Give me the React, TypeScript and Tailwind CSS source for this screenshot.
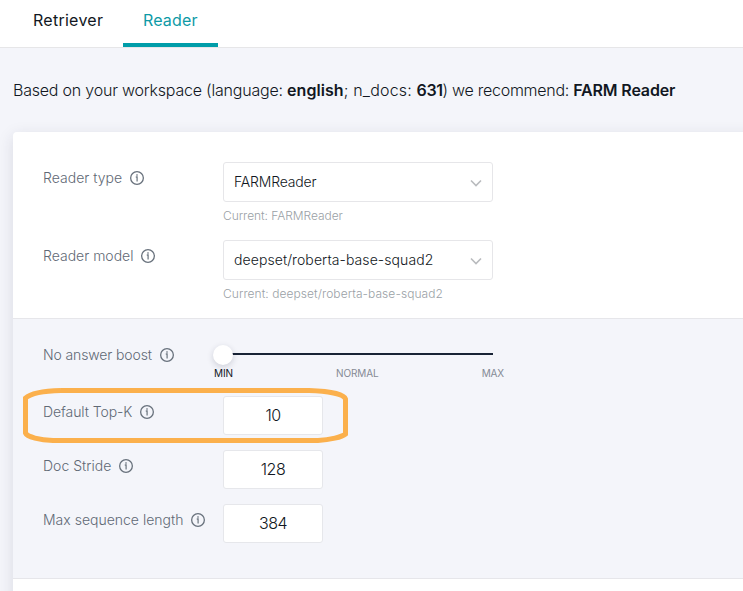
import React from "react";

function InfoIcon() {
  return (
    <svg width="14" height="14" viewBox="0 0 14 14" fill="none" className="ml-2 shrink-0">
      <circle cx="7" cy="7" r="6.35" stroke="#68717c" strokeWidth="1.3" />
      <path d="M5.8 6H7.1V10.4" stroke="#747d87" strokeWidth="1.3" />
      <rect x="6.3" y="3.3" width="1.4" height="1.4" fill="#68717c" />
    </svg>
  );
}

function Label({ text, width }: { text: string; width: string }) {
  return (
    <div className="flex h-8 w-[180px] shrink-0 items-center text-sm font-light text-[#5f6975]">
      <span className={`whitespace-nowrap ${width}`}>{text}</span>
      <InfoIcon />
    </div>
  );
}

function SelectRow({ label, labelClass, value, valueClass, currentClass }: {
  label: string;
  labelClass: string;
  value: string;
  valueClass: string;
  currentClass: string;
}) {
  return (
    <div className="flex h-[78px] items-start">
      <Label text={label} width={labelClass} />
      <div className="w-[270px]">
        <div className="flex h-10 items-center justify-between rounded-[3px] border border-[#e6e6e9] bg-white pl-[10px] pr-[10px] text-sm font-light text-[#111722]">
          <span className={`whitespace-nowrap ${valueClass}`}>{value}</span>
          <svg width="12" height="8" viewBox="0 0 12 8" fill="none" className="mt-[2px]">
            <path d="M1 1.5L6 6.5L11 1.5" stroke="#b9bbbe" strokeWidth="1.6" />
          </svg>
        </div>
        <div className="mt-[5px] h-[18px] text-xs leading-[18px] font-light text-[#9a9fa6]">
          <span className={`whitespace-nowrap ${currentClass}`}>Current: {value}</span>
        </div>
      </div>
    </div>
  );
}

function NumberRow({ label, labelClass, value }: { label: string; labelClass: string; value: string }) {
  return (
    <div className="flex h-[54px] items-start">
      <Label text={label} width={labelClass} />
      <div className="flex h-[39px] w-[100px] items-center justify-center rounded-[3px] border border-[#e6e7eb] bg-white pb-px text-base font-light tracking-[-0.5px] text-[#111722]">
        {value}
      </div>
    </div>
  );
}

export default function App() {
  return (
    <div className="relative h-[591px] w-full overflow-hidden bg-[#f4f5fa] font-['Inter','Noto_Sans',sans-serif] text-[#111722]">
      <nav className="flex h-12 border-b border-[#e6e6e8] bg-white pl-[13px] text-base leading-[40px]">
        <div className="h-[47px] w-[110px] pl-5">
          <span className="inline-block tracking-[0.27px]">Retriever</span>
        </div>
        <div className="h-[47px] w-[95px] border-b-4 border-[#009da9] pl-5 text-[#0d9aa6]">
          <span className="inline-block tracking-[0.15px]">Reader</span>
        </div>
      </nav>
      <p className="h-[84px] pt-[30px] pl-[13px] text-base leading-6 font-light whitespace-nowrap">
        <span className="tracking-[-0.21px]">Based on your workspace (language: </span>
        <span className="font-semibold tracking-[0.05px]">english</span>
        <span className="tracking-[0.18px]">; n_docs: </span>
        <span className="font-semibold tracking-[-0.4px]">631</span>
        <span className="tracking-[-0.27px]">) we recommend: </span>
        <span className="font-semibold tracking-[-0.16px]">FARM Reader</span>
      </p>
      <main className="ml-[13px] h-[480px] w-[760px] rounded-tl-[4px] bg-white shadow-[0_4px_16px_rgba(35,40,70,0.13)]">
        <section className="h-[187px] border-b border-[#e6e6ea] pt-[30px] pl-[30px]">
          <SelectRow label="Reader type" labelClass="tracking-[0.02px]" value="FARMReader" valueClass="tracking-[-0.18px]" currentClass="tracking-[-0.05px]" />
          <SelectRow label="Reader model" labelClass="tracking-[0px]" value="deepset/roberta-base-squad2" valueClass="tracking-[0.08px]" currentClass="tracking-[0.06px]" />
        </section>
        <section className="h-[260px] border-b border-[#e6e6ea] bg-[#f4f5fa] pt-5 pl-[30px]">
          <div className="flex h-[57px] items-start">
            <Label text="No answer boost" width="tracking-[-0.12px]" />
            <div className="relative w-[270px] pt-[14px]">
              <div className="h-[2px] bg-[#182335]" />
              <div className="absolute top-[6px] -left-[10px] size-5 rounded-full bg-white shadow-[0_2px_6px_rgba(30,35,60,0.18)]" />
              <div className="mt-[10px] -mr-[11px] -ml-[9px] flex justify-between text-[10px] leading-4 tracking-[-0.15px] text-[#858a95]">
                <span className="text-[#111722]">MIN</span>
                <span>NORMAL</span>
                <span>MAX</span>
              </div>
            </div>
          </div>
          <NumberRow label="Default Top-K" labelClass="tracking-[-0.08px]" value="10" />
          <NumberRow label="Doc Stride" labelClass="tracking-[0.02px]" value="128" />
          <NumberRow label="Max sequence length" labelClass="tracking-[0px]" value="384" />
        </section>
      </main>
      <svg className="absolute top-[380px] left-[15px]" width="345" height="70" viewBox="15 380 345 70" fill="none">
        <path d="M61 390.5H309C327 391 344 394 345.5 399V434C342 437 330 440 318 440.500H53C40 440 27 437 25.500 433V398C31 393 43 391 61 390.500" stroke="#fbb04c" strokeWidth="5" />
      </svg>
    </div>
  );
}
